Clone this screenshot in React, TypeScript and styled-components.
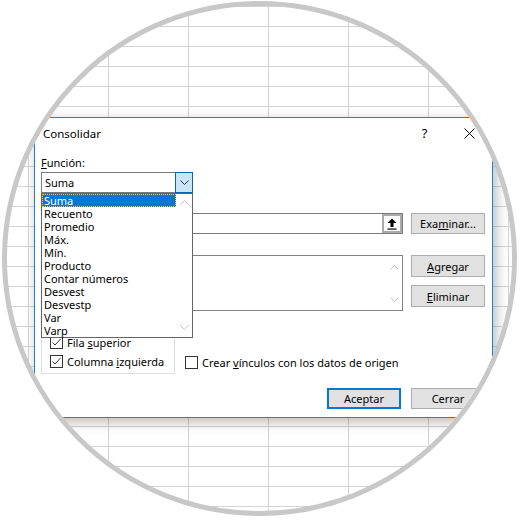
import styled, { createGlobalStyle } from "styled-components";

const GlobalStyle = createGlobalStyle`
  body {
    margin: 0;
    background: #fff;
  }
`;

const Frame = styled.div`
  width: 520px;
  height: 520px;
  box-sizing: border-box;
  padding: 1px 0 0 2px;
  background: #fff;
  font-family: "Segoe UI", "Noto Sans", sans-serif;
  font-size: 11px;
  color: #000;
`;

// magnifier lens over the worksheet
const Lens = styled.div`
  position: relative;
  width: 515px;
  height: 515px;
  box-sizing: border-box;
  border: 5px solid #c8c8c8;
  border-radius: 50%;
  overflow: hidden;
  background-color: #fff;
  background-image: linear-gradient(to right, #d4d4d4 1px, transparent 1px),
    linear-gradient(to bottom, #d4d4d4 1px, transparent 1px);
  background-size: 80px 20px;
  background-position: 21px 0;
`;

const Dialog = styled.div`
  position: absolute;
  left: 27px;
  top: 111px;
  width: 459px;
  height: 301px;
  box-sizing: border-box;
  border: 1px solid #1883d7;
  background: #fff;
  box-shadow: 3px 4px 12px rgba(0, 0, 0, 0.28);
  display: flex;
  flex-direction: column;
`;

const TitleBar = styled.div`
  display: flex;
  align-items: center;
  height: 30px;
  padding-left: 8px;
  font-size: 11.5px;
`;
const Title = styled.span`
  flex: 1;
`;
const CaptionButton = styled.div`
  width: 45px;
  height: 30px;
  display: flex;
  align-items: center;
  justify-content: center;
  font-size: 13px;
`;

const Body = styled.div`
  display: flex;
  flex-direction: column;
  padding: 8px 7px 0 6px;
`;
const Label = styled.div<{ $gap: number }>`
  height: 14px;
  line-height: 14px;
  margin-top: ${(p) => p.$gap}px;
`;

const Combo = styled.div`
  position: relative;
  display: flex;
  width: 152px;
  height: 21px;
  margin-top: 2px;
`;
const ComboField = styled.div`
  flex: 1;
  border: 1px solid #7a7a7a;
  border-right: none;
  padding-left: 3px;
  line-height: 19px;
`;
const ComboButton = styled.div`
  width: 18px;
  box-sizing: border-box;
  border: 1px solid #0a64ad;
  background: #cce4f7;
  display: flex;
  align-items: center;
  justify-content: center;
`;
const DropList = styled.div`
  position: absolute;
  top: 100%;
  left: 0;
  z-index: 2;
  width: 152px;
  height: 145px;
  box-sizing: border-box;
  border: 1px solid #646464;
  background: #fff;
  display: flex;
`;
const Items = styled.div`
  flex: 1;
  display: flex;
  flex-direction: column;
`;
const Item = styled.div<{ $selected?: boolean }>`
  height: 13px;
  box-sizing: border-box;
  line-height: ${(p) => (p.$selected ? 11 : 13)}px;
  padding-left: ${(p) => (p.$selected ? 1 : 2)}px;
  white-space: nowrap;
  background: ${(p) => (p.$selected ? "#0078d7" : "transparent")};
  color: ${(p) => (p.$selected ? "#fff" : "#000")};
  border: ${(p) => (p.$selected ? "1px dotted #f3c37a" : "none")};
`;
const ScrollCol = styled.div<{ $top: number; $bottom: number }>`
  width: 16px;
  display: flex;
  flex-direction: column;
  align-items: center;
  justify-content: space-between;
  padding: ${(p) => p.$top}px 0 ${(p) => p.$bottom}px;
  box-sizing: border-box;
`;

const FieldRow = styled.div`
  display: flex;
  gap: 8px;
  margin-top: 3px;
`;
const Input = styled.div`
  width: 362px;
  height: 21px;
  box-sizing: border-box;
  border: 1px solid #7a7a7a;
  display: flex;
  justify-content: flex-end;
`;
const CollapseButton = styled.div`
  width: 20px;
  height: 19px;
  box-sizing: border-box;
  border: 2px solid #ababab;
  background: #fff;
  display: flex;
  align-items: center;
  justify-content: center;
`;
const ListBox = styled.div`
  width: 362px;
  height: 56px;
  box-sizing: border-box;
  border: 1px solid #828282;
  display: flex;
  justify-content: flex-end;
`;
const ButtonStack = styled.div`
  display: flex;
  flex-direction: column;
  gap: 8px;
`;
const Button = styled.div<{ $default?: boolean; $short?: boolean }>`
  width: 74px;
  height: ${(p) => (p.$short ? 21 : 22)}px;
  box-sizing: border-box;
  display: flex;
  align-items: center;
  justify-content: center;
  background: #e1e1e1;
  border: ${(p) => (p.$default ? "2px solid #0078d7" : "1px solid #adadad")};
`;

const OptionsRow = styled.div`
  display: flex;
  align-items: flex-end;
  gap: 10px;
  margin-top: 11px;
`;
const Group = styled.div`
  width: 134px;
  box-sizing: border-box;
  border: 1px solid #dcdcdc;
  padding: 13px 0 5px 8px;
  display: flex;
  flex-direction: column;
  gap: 6px;
`;
const CheckRow = styled.div<{ $lift?: number }>`
  display: flex;
  align-items: center;
  gap: 4px;
  height: 13px;
  white-space: nowrap;
  margin-bottom: ${(p) => p.$lift || 0}px;
`;
const Box = styled.div`
  width: 13px;
  height: 13px;
  box-sizing: border-box;
  border: 1px solid #333;
  background: #fff;
  display: flex;
  align-items: center;
  justify-content: center;
`;

const Footer = styled.div`
  display: flex;
  justify-content: flex-end;
  gap: 10px;
  margin-top: 14px;
`;

const Chevron = ({ up, color }: { up?: boolean; color: string }) => (
  <svg width="9" height="5" viewBox="0 0 9 5">
    <polyline
      points={up ? "0.5,4.5 4.5,0.5 8.5,4.5" : "0.5,0.5 4.5,4.5 8.5,0.5"}
      fill="none"
      stroke={color}
      strokeWidth="1"
    />
  </svg>
);

const Check = ({ checked }: { checked?: boolean }) => (
  <Box>
    {checked && (
      <svg width="11" height="11" viewBox="0 0 11 11">
        <polyline points="1.5,5.5 4,8 9.5,2" fill="none" stroke="#333" strokeWidth="1" />
      </svg>
    )}
  </Box>
);

const functions = [
  "Suma",
  "Recuento",
  "Promedio",
  "Máx.",
  "Mín.",
  "Producto",
  "Contar números",
  "Desvest",
  "Desvestp",
  "Var",
  "Varp",
];

export default function App() {
  return (
    <Frame>
      <GlobalStyle />
      <Lens>
        <Dialog>
          <TitleBar>
            <Title>Consolidar</Title>
            <CaptionButton>?</CaptionButton>
            <CaptionButton>
              <svg width="11" height="11" viewBox="0 0 11 11">
                <path d="M0.5 0.5 L10.5 10.5 M10.5 0.5 L0.5 10.5" stroke="#000" strokeWidth="1" />
              </svg>
            </CaptionButton>
          </TitleBar>
          <Body>
            <Label $gap={0}>
              <u>F</u>unción:
            </Label>
            <Combo>
              <ComboField>Suma</ComboField>
              <ComboButton>
                <Chevron color="#333" />
              </ComboButton>
              <DropList>
                <Items>
                  {functions.map((f, i) => (
                    <Item key={f} $selected={i === 0}>
                      {f}
                    </Item>
                  ))}
                </Items>
                <ScrollCol $top={6} $bottom={7}>
                  <Chevron up color="#c2c2c2" />
                  <Chevron color="#c2c2c2" />
                </ScrollCol>
              </DropList>
            </Combo>
            <Label $gap={3}>
              <u>R</u>eferencia:
            </Label>
            <FieldRow>
              <Input>
                <CollapseButton>
                  <svg width="10" height="12" viewBox="0 0 10 12">
                    <path d="M5 0.5 L9.5 5 L6.5 5 L6.5 9 L3.5 9 L3.5 5 L0.5 5 Z" fill="#000" />
                    <rect x="0.5" y="10.5" width="9" height="1.2" fill="#000" />
                  </svg>
                </CollapseButton>
              </Input>
              <Button $short>
                Exa<u>m</u>inar...
              </Button>
            </FieldRow>
            <Label $gap={4}>
              <u>T</u>odas las referencias:
            </Label>
            <FieldRow>
              <ListBox>
                <ScrollCol $top={9} $bottom={8}>
                  <Chevron up color="#c2c2c2" />
                  <Chevron color="#c2c2c2" />
                </ScrollCol>
              </ListBox>
              <ButtonStack>
                <Button>
                  <u>A</u>gregar
                </Button>
                <Button>
                  <u>E</u>liminar
                </Button>
              </ButtonStack>
            </FieldRow>
            <OptionsRow>
              <Group>
                <CheckRow>
                  <Check checked />
                  <span>
                    Fila <u>s</u>uperior
                  </span>
                </CheckRow>
                <CheckRow>
                  <Check checked />
                  <span>
                    Columna <u>i</u>zquierda
                  </span>
                </CheckRow>
              </Group>
              <CheckRow $lift={5}>
                <Check />
                <span>
                  Crear <u>v</u>ínculos con los datos de origen
                </span>
              </CheckRow>
            </OptionsRow>
            <Footer>
              <Button $default $short>
                Aceptar
              </Button>
              <Button $short>Cerrar</Button>
            </Footer>
          </Body>
        </Dialog>
      </Lens>
    </Frame>
  );
}
